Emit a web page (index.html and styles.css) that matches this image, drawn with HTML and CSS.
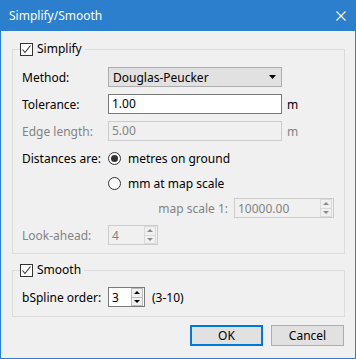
FILE: index.html
```html
<!DOCTYPE html>
<html lang="en">

<head>
    <meta charset="UTF-8" />
    <meta name="viewport" content="width=device-width, initial-scale=1.0" />
    <title>Simplify/Smooth</title>
    <link rel="stylesheet" href="styles.css">
</head>

<body>
    <div class="window">
        <div class="titlebar">
            <span class="title">Simplify/Smooth</span>
            <svg class="close" width="10" height="10" viewBox="0 0 10 10">
                <path d="M0.5 0.5 L9.5 9.5 M9.5 0.5 L0.5 9.5" stroke="#fff" stroke-width="1.2" fill="none" />
            </svg>
        </div>
        <div class="content">
            <fieldset class="group">
                <legend>
                    <span class="check">
                        <svg width="11" height="11" viewBox="0 0 11 11">
                            <path d="M1.5 5.5 L4 8.5 L9.5 1.5" stroke="#333" stroke-width="1.1" fill="none" />
                        </svg>
                    </span>
                    Simplify
                </legend>
                <div class="row">
                    <span class="label">Method:</span>
                    <div class="combo">
                        <span>Douglas-Peucker</span>
                        <svg width="7" height="4" viewBox="0 0 7 4"><path d="M0 0 H7 L3.5 4 Z" fill="#000" /></svg>
                    </div>
                </div>
                <div class="row">
                    <span class="label">Tolerance:</span>
                    <div class="edit">1.00</div>
                    <span class="unit">m</span>
                </div>
                <div class="row disabled">
                    <span class="label">Edge length:</span>
                    <div class="edit">5.00</div>
                    <span class="unit">m</span>
                </div>
                <div class="row">
                    <span class="label">Distances are:</span>
                    <span class="radio on"></span>
                    <span>metres on ground</span>
                </div>
                <div class="row tight">
                    <span class="label"></span>
                    <span class="radio"></span>
                    <span>mm at map scale</span>
                </div>
                <div class="row tight disabled right">
                    <span class="scale-label">map scale 1:</span>
                    <div class="spin wide">
                        <span class="value">10000.00</span>
                        <span class="arrows">
                            <span class="up"></span>
                            <span class="down"></span>
                        </span>
                    </div>
                </div>
                <div class="row disabled">
                    <span class="label">Look-ahead:</span>
                    <div class="spin medium">
                        <span class="value">4</span>
                        <span class="arrows">
                            <span class="up"></span>
                            <span class="down"></span>
                        </span>
                    </div>
                </div>
            </fieldset>

            <fieldset class="group second">
                <legend>
                    <span class="check">
                        <svg width="11" height="11" viewBox="0 0 11 11">
                            <path d="M1.5 5.5 L4 8.5 L9.5 1.5" stroke="#333" stroke-width="1.1" fill="none" />
                        </svg>
                    </span>
                    Smooth
                </legend>
                <div class="row">
                    <span class="label">bSpline order:</span>
                    <div class="spin small active">
                        <span class="value">3</span>
                        <span class="arrows">
                            <span class="up"></span>
                            <span class="down"></span>
                        </span>
                    </div>
                    <span class="range">(3-10)</span>
                </div>
            </fieldset>

            <div class="buttons">
                <button class="btn default">OK</button>
                <button class="btn">Cancel</button>
            </div>
        </div>
    </div>
</body>

</html>
```

FILE: styles.css
```css
* {
    margin: 0;
    padding: 0;
    box-sizing: border-box;
}

body {
    font-family: 'Noto Sans', 'Open Sans', sans-serif;
    font-size: 12px;
    color: #000;
    background: #f0f0f0;
}

.window {
    width: 356px;
    height: 359px;
    border: 1px solid #2b7fcd;
    border-top: 0;
    background: #f0f0f0;
    display: flex;
    flex-direction: column;
}

.titlebar {
    height: 31px;
    margin: 0 -1px;
    background: #2b7fcd;
    display: flex;
    align-items: center;
    justify-content: space-between;
    padding: 0 10px 0 9px;
    color: #fff;
}

.title {
    font-size: 12px;
    line-height: 14px;
}

.content {
    padding: 11px 10px 0 11px;
}

.group {
    border: 1px solid #dcdcdc;
    padding: 11px 10px 8px 9px;
    min-width: 0;
}

.group.second {
    margin-top: 9px;
    padding-top: 10px;
    padding-bottom: 9px;
}

.group legend {
    display: flex;
    align-items: center;
    height: 14px;
    line-height: 14px;
    margin-left: -2px;
    padding-right: 3px;
}

.check {
    width: 13px;
    height: 13px;
    border: 1px solid #333;
    background: #fff;
    margin-right: 4px;
    display: flex;
    align-items: center;
    justify-content: center;
}

.row {
    display: flex;
    align-items: center;
    height: 20px;
    margin-bottom: 7px;
}

.row:last-child {
    margin-bottom: 0;
}

.row.tight {
    margin-top: -2px;
}

.row.right {
    justify-content: flex-end;
}

.label {
    width: 86px;
    flex-shrink: 0;
}

.disabled {
    color: #838383;
}

.combo {
    width: 174px;
    height: 20px;
    background: #e1e1e1;
    border: 1px solid #adadad;
    display: flex;
    align-items: center;
    justify-content: space-between;
    padding: 0 5px 0 4px;
}

.edit {
    width: 174px;
    height: 20px;
    background: #fff;
    border: 1px solid #7a7a7a;
    padding-left: 3px;
    line-height: 18px;
}

.disabled .edit {
    background: #f0f0f0;
    border-color: #cccccc;
}

.unit {
    margin-left: 5px;
}

.radio {
    width: 13px;
    height: 13px;
    border: 1px solid #333;
    border-radius: 50%;
    background: #fff;
    margin-right: 7px;
    display: flex;
    align-items: center;
    justify-content: center;
}

.radio.on::after {
    content: "";
    width: 7px;
    height: 7px;
    border-radius: 50%;
    background: #333;
}

.scale-label {
    margin-right: 6px;
}

.spin {
    height: 20px;
    border: 1px solid #cccccc;
    background: #f0f0f0;
    display: flex;
    align-items: center;
    justify-content: space-between;
    padding: 0 1px 0 3px;
}

.spin.active {
    border-color: #7a7a7a;
    background: #fff;
}

.spin.wide {
    width: 100px;
}

.spin.medium {
    width: 50px;
}

.spin.small {
    width: 37px;
}

.arrows {
    width: 12px;
    height: 18px;
    display: flex;
    flex-direction: column;
}

.arrows span {
    flex: 1;
    border: 1px solid #dadada;
    background: #f0f0f0;
    display: flex;
    align-items: center;
    justify-content: center;
}

.active .arrows span {
    border-color: #bcbcbc;
}

.arrows .down {
    border-top: 0;
}

.arrows .up::after,
.arrows .down::after {
    content: "";
    border-left: 3px solid transparent;
    border-right: 3px solid transparent;
}

.arrows .up::after {
    border-bottom: 3px solid #8a8a8a;
}

.arrows .down::after {
    border-top: 3px solid #8a8a8a;
}

.active .arrows .up::after {
    border-bottom-color: #000;
}

.active .arrows .down::after {
    border-top-color: #000;
}

.range {
    margin-left: 7px;
}

.buttons {
    display: flex;
    justify-content: flex-end;
    gap: 8px;
    margin-top: 8px;
    padding-right: 1px;
}

.btn {
    font-family: inherit;
    font-size: 12px;
    height: 21px;
    width: 73px;
    background: #e1e1e1;
    border: 1px solid #adadad;
    color: #000;
}

.btn.default {
    border: 2px solid #0078d7;
}
```
